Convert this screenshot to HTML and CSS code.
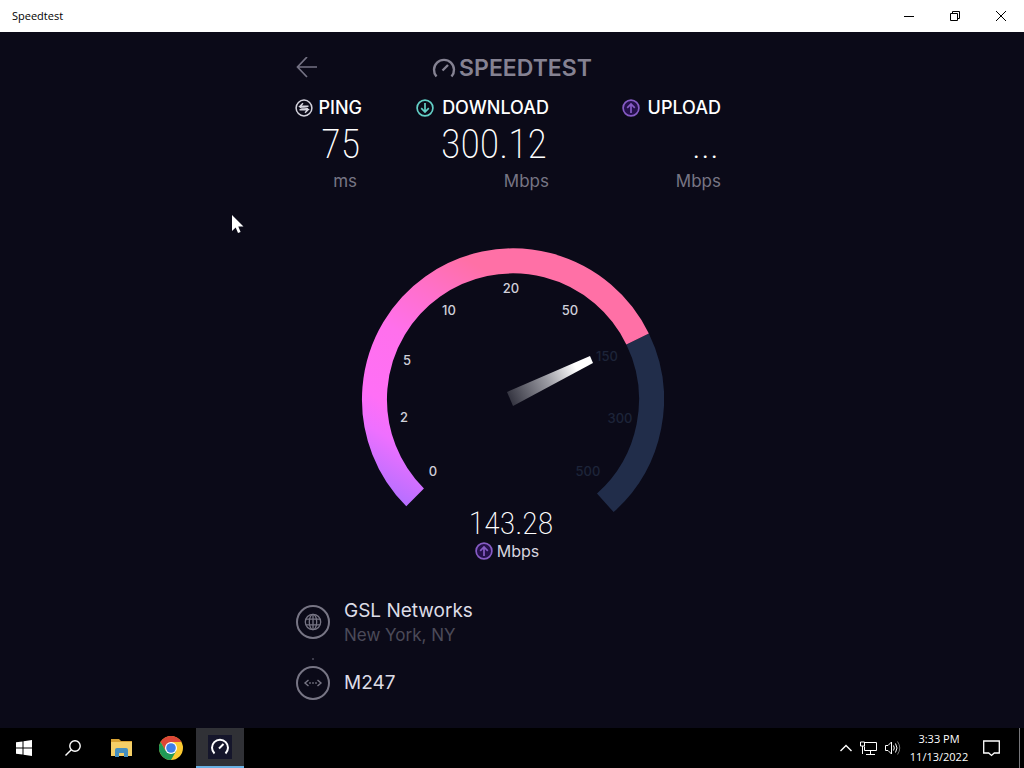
FILE: index.html
```html
<!DOCTYPE html>
<html lang="en">
<head>
<meta charset="utf-8">
<meta name="viewport" content="width=device-width, initial-scale=1">
<title>Speedtest</title>
<link rel="stylesheet" href="styles.css">
</head>
<body>
<header class="titlebar">
  <span class="titlebar-name">Speedtest</span>
  <div class="window-controls">
    <button type="button" aria-label="Minimize"><svg width="10" height="10" viewBox="0 0 10 10"><path d="M0 5.5h10" stroke="#000" fill="none"/></svg></button>
    <button type="button" aria-label="Restore"><svg width="10" height="10" viewBox="0 0 10 10"><path d="M.5 2.5h7v7h-7zM2.500 2.500v-2h7v7h-2" stroke="#000" fill="none"/></svg></button>
    <button type="button" aria-label="Close"><svg width="10" height="10" viewBox="0 0 10 10"><path d="M0 0l10 10M10 0L0 10" stroke="#000" fill="none"/></svg></button>
  </div>
</header>

<main class="app">
  <div class="panel">
    <div class="brandbar">
      <button class="back" type="button" aria-label="Back"><svg width="22" height="22" viewBox="0 0 22 22"><path d="M21 10H1.500M11 0L1.500 10l9.500 10" fill="none" stroke="#747283" stroke-width="1.700"/></svg></button>
      <div class="brand">
        <svg width="24" height="22" viewBox="0 0 24 22"><path d="M4.500 19.500A10 10 0 1 1 19.500 19.500M10.500 13.500L16 8" fill="none" stroke="#858292" stroke-width="2.400"/></svg>
        <span>SPEEDTEST</span>
      </div>
    </div>

    <section class="stats">
      <div class="stat">
        <h2><svg width="18" height="18" viewBox="0 0 18 18"><g fill="none" stroke="#d5d4de" stroke-width="1.500"><circle cx="9" cy="9" r="7.900"/><path d="M13.500 7.200H5L8 4.200M4.500 10.800H13L10 13.800M5 7.200c0 2 2 1.900 4 1.900s4 0 4 1.700"/></g></svg>PING</h2>
        <p class="value">75</p>
        <p class="unit unit-ping">ms</p>
      </div>
      <div class="stat">
        <h2><svg width="18" height="18" viewBox="0 0 18 18"><g fill="none" stroke="#63cfc6" stroke-width="1.700"><circle cx="9" cy="9" r="7.900"/><path d="M9 4v9M5.200 9.200L9 13l3.800-3.800"/></g></svg>DOWNLOAD</h2>
        <p class="value">300.12</p>
        <p class="unit">Mbps</p>
      </div>
      <div class="stat">
        <h2><svg width="18" height="18" viewBox="0 0 18 18"><g fill="#24104a" stroke="#865bc4" stroke-width="1.700"><circle cx="9" cy="9" r="7.900"/><path fill="none" d="M9 14V5M5.200 8.800L9 5l3.800 3.800"/></g></svg>UPLOAD</h2>
        <p class="value">...</p>
        <p class="unit">Mbps</p>
      </div>
    </section>

    <section class="meter" aria-label="Upload speed">
      <svg class="gauge" width="304" height="266" viewBox="360 247 304 266">
        <defs>
          <linearGradient id="arc" gradientUnits="userSpaceOnUse" x1="400" y1="500" x2="520" y2="290">
            <stop offset="0" stop-color="#b86fff"/>
            <stop offset=".2" stop-color="#ee70ff"/>
            <stop offset=".32" stop-color="#ff6ff6"/>
            <stop offset=".6" stop-color="#ff70ec"/>
            <stop offset=".8" stop-color="#ff70cc"/>
            <stop offset="1" stop-color="#ff70a6"/>
          </linearGradient>
          <linearGradient id="needle" gradientUnits="userSpaceOnUse" x1="510" y1="399" x2="592" y2="359">
            <stop offset="0" stop-color="#353541"/>
            <stop offset=".45" stop-color="#9a9aa2"/>
            <stop offset=".8" stop-color="#fff"/>
          </linearGradient>
        </defs>
        <path d="M637.600 339A138.500 138.500 0 0 1 605.300 502.800" fill="none" stroke="#212d4a" stroke-width="25"/>
        <path d="M415.100 497.400A138.500 138.500 0 1 1 637.600 339" fill="none" stroke="url(#arc)" stroke-width="25"/>
        <g class="ticks" text-anchor="middle">
          <text x="433" y="476">0</text>
          <text x="404" y="422">2</text>
          <text x="407" y="365">5</text>
          <text x="449" y="315">10</text>
          <text x="511" y="293">20</text>
          <text x="570" y="315">50</text>
          <g class="ticks-ahead">
            <text x="607" y="361">150</text>
            <text x="620" y="423">300</text>
            <text x="588" y="476">500</text>
          </g>
        </g>
        <path d="M507 392l83-36 3 7-80 43z" fill="url(#needle)"/>
      </svg>
      <p class="current">143.28</p>
      <p class="current-unit"><svg width="18" height="18" viewBox="0 0 18 18"><g fill="#24104a" stroke="#865bc4" stroke-width="1.700"><circle cx="9" cy="9" r="7.900"/><path fill="none" d="M9 14V5M5.200 8.800L9 5l3.800 3.800"/></g></svg>Mbps</p>
    </section>

    <section class="hosts">
      <div class="host">
        <svg width="34" height="34" viewBox="0 0 34 34" fill="none" stroke="#777584"><circle cx="17" cy="17" r="16" stroke-width="2"/><g stroke-width="1.300"><circle cx="17" cy="17" r="7.700"/><ellipse cx="17" cy="17" rx="3.700" ry="7.700"/><path d="M17 9v16M10 14.200h14M10 19.800h14"/></g></svg>
        <div><p class="host-name">GSL Networks</p><p class="host-place">New York, NY</p></div>
      </div>
      <span class="link-dot"></span>
      <div class="host">
        <svg width="34" height="34" viewBox="0 0 34 34" fill="none" stroke="#777584"><circle cx="17" cy="17" r="16" stroke-width="2"/><path stroke-width="1.400" d="M12.500 14L9 17l3.500 3M21.500 14l3.500 3-3.500 3"/><path stroke-width="1.600" stroke-dasharray="1.600 1.400" d="M13.200 17h8"/></svg>
        <p class="host-name">M247</p>
      </div>
    </section>
  </div>
</main>

<footer class="taskbar">
  <nav class="launchers">
    <button type="button" aria-label="Start"><svg width="16" height="16" viewBox="0 0 16 16"><path fill="#fff" d="M0 2.300L6.500 1.400V7.500H0zM7.500 1.200L16 0v7.500H7.500zM0 8.500h6.500v6.100L0 13.700zM7.500 8.500H16V16l-8.500-1.200z"/></svg></button>
    <button type="button" aria-label="Search"><svg width="16" height="16" viewBox="0 0 16 16"><g fill="none" stroke="#fff" stroke-width="1.400"><circle cx="10" cy="6" r="5.200"/><path d="M6.300 9.700L.5 15.500"/></g></svg></button>
    <button type="button" aria-label="File Explorer"><svg width="22" height="20" viewBox="0 0 22 20"><path fill="#d9a334" d="M0 1h8l2 2h11v3H0z"/><path fill="#f5cf67" d="M0 4h21v14H0z"/><path fill="#458fc0" d="M4 19v-7q0-2 2-2h9q2 0 2 2v7h-4v-4H8v4z"/></svg></button>
    <button type="button" aria-label="Chrome"><svg width="24" height="24" viewBox="0 0 24 24"><circle cx="12" cy="12" r="12" fill="#fbc931"/><path fill="#dd4637" d="M12 6h10.400A12 12 0 0 0 1.600 6l5.200 9z"/><path fill="#209956" d="M1.600 6A12 12 0 0 0 12 24l5.200-9H6.800z"/><circle cx="12" cy="12" r="6" fill="#fff"/><circle cx="12" cy="12" r="4.800" fill="#3e7ee8"/></svg></button>
    <button class="active" type="button" aria-label="Speedtest"><svg width="24" height="24" viewBox="0 0 24 24"><path fill="#15162b" d="M0 0h24v24H0z"/><path d="M6.500 18.500A8 8 0 1 1 17.500 18.500M11 13.500L15.500 9" fill="none" stroke="#fff" stroke-width="2"/></svg></button>
  </nav>
  <div class="tray">
    <button type="button" aria-label="Show hidden icons"><svg width="12" height="8" viewBox="0 0 12 8"><path d="M.5 7L6 1.500 11.500 7" fill="none" stroke="#fff" stroke-width="1.400"/></svg></button>
    <button type="button" aria-label="Network"><svg width="17" height="14" viewBox="0 0 17 14"><path d="M4.500 1.500h12v8H4.500v-4M10.500 9.500v4M6 13.500h9M.5 1h4v4h-4zM2.500 5v8" fill="none" stroke="#fff"/></svg></button>
    <button type="button" aria-label="Volume"><svg width="16" height="14" viewBox="0 0 16 14"><g fill="none" stroke="#fff"><path d="M.5 4.500H3l3.500-3.500v12L3 9.500H.5zM8.500 4.500q1.600 2.500 0 5M10.500 2.500q3 4.500 0 9"/><path stroke="#777" d="M12.500 .5q4.500 6.500 0 13"/></g></svg></button>
    <div class="clock"><time>3:33 PM</time><time datetime="2022-11-13">11/13/2022</time></div>
    <button class="notify" type="button" aria-label="Notifications"><svg width="17" height="17" viewBox="0 0 17 17"><path d="M.7 1h15.600v12h-5L8.500 15.500 5.700 13h-5z" fill="none" stroke="#fff" stroke-width="1.300"/></svg></button>
  </div>
</footer>

<svg class="pointer" width="12" height="19" viewBox="0 0 12 19"><path fill="#fff" d="M0 0v16l3.700-3.500L6 18l2.600-1.100L6.300 11.500H11.500z"/></svg>
</body>
</html>
```
FILE: styles.css
```css
* { box-sizing: border-box; }

body {
  margin: 0;
  min-height: 100vh;
  display: grid;
  grid-template-rows: 32px 1fr 40px;
  background: #0b0a18;
  color: #fff;
  font-family: Inter, "Open Sans", sans-serif;
}

h2, p { margin: 0; font-weight: 400; }
svg { display: block; flex: none; }

button {
  display: flex;
  align-items: center;
  justify-content: center;
  padding: 0;
  border: 0;
  background: none;
}

.titlebar {
  display: flex;
  justify-content: space-between;
  align-items: center;
  padding-left: 12px;
  background: #fff;
  color: #000;
  font: 11px/16px "Open Sans", sans-serif;
}
.window-controls { display: flex; height: 100%; }
.window-controls button { width: 46px; }

.app { display: flex; justify-content: center; }
.panel { width: 432px; padding-top: 24px; }

.brandbar {
  display: grid;
  grid-template-columns: 1fr auto 1fr;
  align-items: center;
  height: 24px;
}
.back { justify-self: start; }
.brand {
  display: flex;
  align-items: center;
  gap: 3px;
  color: #858292;
  font-size: 23px;
  font-weight: 600;
  line-height: 24px;
}

.stats {
  display: grid;
  grid-template-columns: 66px 187px 172px;
  padding-top: 17px;
}
.stat { text-align: right; }
.stat h2 {
  display: flex;
  align-items: center;
  justify-content: flex-end;
  gap: 5px;
  font-size: 18px;
  font-weight: 500;
  line-height: 22px;
}
.stat + .stat h2 { gap: 8px; }
.value {
  padding-right: 2px;
  font: 200 40px/52px "Roboto Condensed", Roboto, sans-serif;
}
.unit {
  color: #777584;
  font-size: 17px;
  line-height: 20px;
}
.unit-ping { padding-right: 5px; }

.meter {
  display: flex;
  flex-direction: column;
  align-items: center;
  padding-top: 56px;
}
.ticks {
  fill: #d0d0da;
  font-size: 13px;
  font-weight: 500;
}
.ticks-ahead { fill: #1d2439; }
.current {
  padding-right: 2px;
  font: 200 32px/20px "Roboto Condensed", Roboto, sans-serif;
}
.current-unit {
  display: flex;
  align-items: center;
  gap: 4px;
  padding: 6px 10px 0 0;
  color: #d5d4de;
  font-size: 16px;
  line-height: 24px;
}

.hosts { padding-top: 35px; }
.host {
  display: flex;
  align-items: center;
  gap: 14px;
  min-height: 34px;
}
.host-name {
  color: #dddce6;
  font-size: 19px;
  line-height: 26px;
}
.host-place {
  color: #4b4a59;
  font-size: 17px;
  line-height: 22px;
}
.link-dot {
  display: block;
  width: 2px;
  height: 2px;
  margin: 12px 16px 6px;
  background: #3c3b4a;
}

.taskbar {
  display: flex;
  justify-content: space-between;
  background: #000;
}
.launchers { display: flex; gap: 1px; }
.launchers button { width: 48px; }
.launchers .active {
  background: #303136;
  border-bottom: 2px solid #69b1e4;
}
.tray {
  display: flex;
  align-items: center;
  gap: 8px;
  padding-right: 4px;
}
.clock {
  display: grid;
  width: 60px;
  text-align: center;
  font: 11px/18px "Open Sans", sans-serif;
}
.notify {
  width: 43px;
  height: 100%;
  border-right: 1px solid #77777b;
  padding-right: 14px;
}

.pointer { position: absolute; left: 232px; top: 215px; }
```
